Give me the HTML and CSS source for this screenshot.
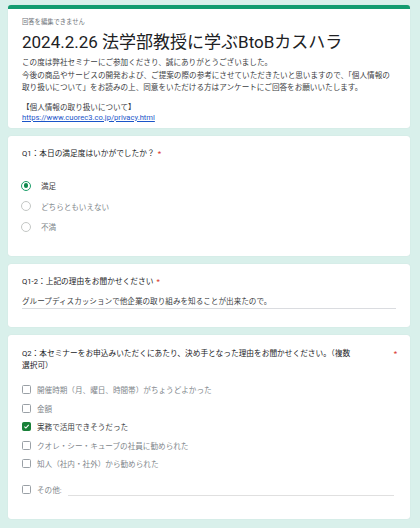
FILE: index.html
```html
<!DOCTYPE html>
<html lang="ja">
<head>
    <meta charset="UTF-8">
    <meta name="viewport" content="width=device-width, initial-scale=1.0">
    <title>2024.2.26 法学部教授に学ぶBtoBカスハラ</title>
    <link rel="stylesheet" href="styles.css">
</head>
<body>
    <!-- Header card -->
    <div class="card header-card">
        <div class="notice">回答を編集できません</div>
        <h1 class="form-title">2024.2.26 法学部教授に学ぶBtoBカスハラ</h1>
        <p class="description">この度は弊社セミナーにご参加くださり、誠にありがとうございました。<br>今後の商品やサービスの開発および、ご提案の際の参考にさせていただきたいと思いますので、「個人情報の<br>取り扱いについて」をお読みの上、同意をいただける方はアンケートにご回答をお願いいたします。</p>
        <p class="privacy">【個人情報の取り扱いについて】<br><a href="#">https://www.cuorec3.co.jp/privacy.html</a></p>
    </div>

    <!-- Q1 -->
    <div class="card q1-card">
        <div class="question">Q1：本日の満足度はいかがでしたか？<span class="required">*</span></div>
        <ul class="options radio-list">
            <li class="selected"><span class="radio checked"></span>満足</li>
            <li><span class="radio"></span>どちらともいえない</li>
            <li><span class="radio"></span>不満</li>
        </ul>
    </div>

    <!-- Q1-2 -->
    <div class="card q12-card">
        <div class="question">Q1-2：上記の理由をお聞かせください<span class="required">*</span></div>
        <div class="answer">グループディスカッションで他企業の取り組みを知ることが出来たので。</div>
    </div>

    <!-- Q2 -->
    <div class="card q2-card">
        <div class="question wide">
            <span>Q2：本セミナーをお申込みいただくにあたり、決め手となった理由をお聞かせください。（複数<br>選択可）</span>
            <span class="required">*</span>
        </div>
        <ul class="options check-list">
            <li><span class="checkbox"></span>開催時期（月、曜日、時間帯）がちょうどよかった</li>
            <li><span class="checkbox"></span>金額</li>
            <li class="selected"><span class="checkbox checked"><svg viewBox="0 0 10 10" width="9" height="9"><path d="M2 5.2 L4.1 7.2 L8.2 2.8" fill="none" stroke="#fff" stroke-width="1.6"/></svg></span>実務で活用できそうだった</li>
            <li><span class="checkbox"></span>クオレ・シー・キューブの社員に勧められた</li>
            <li><span class="checkbox"></span>知人（社内・社外）から勧められた</li>
            <li class="other"><span class="checkbox"></span>その他:<span class="other-line"></span></li>
        </ul>
    </div>
</body>
</html>
```

FILE: styles.css
```css
body {
    margin: 0;
    padding: 5px 10px 8px 8px;
    background-color: #d9f0eb;
    font-family: Roboto, "Noto Sans CJK JP", sans-serif;
    color: #202124;
}

.card {
    background: #fff;
    border-radius: 3px;
    box-shadow: 0 0 1px rgba(0, 0, 0, 0.12);
    padding: 12px 14px 18px 14px;
    margin-bottom: 8px;
}

.header-card {
    border-top: 4px solid #139c70;
    padding-top: 8px;
    padding-bottom: 5px;
}

.notice {
    font-size: 6.3px;
    line-height: 10px;
    color: #70757a;
}

.form-title {
    font-size: 17px;
    font-weight: 400;
    line-height: 22px;
    margin: 4px 0 4px 0;
    color: #202124;
}

.description {
    font-size: 7.6px;
    line-height: 12.5px;
    margin: 0;
    color: #3c4043;
}

.privacy {
    font-size: 7.6px;
    line-height: 10px;
    margin: 8px 0 0 0;
    color: #3c4043;
}

.privacy a {
    color: #1a55c9;
}

.question {
    font-size: 7.7px;
    line-height: 12px;
    color: #202124;
}

.question.wide {
    display: flex;
    justify-content: space-between;
    line-height: 11.5px;
}

.required {
    color: #d93025;
    margin-left: 3px;
}

.options {
    list-style: none;
    margin: 0;
    padding: 0;
    font-size: 7.6px;
    color: #80868b;
}

.options li {
    display: flex;
    align-items: center;
}

.options li.selected {
    color: #3c4043;
}

/* Q1 radios */
.q1-card {
    padding-bottom: 19px;
}

.radio-list {
    margin-top: 16px;
}

.radio-list li {
    height: 20.5px;
}

.radio {
    box-sizing: border-box;
    width: 10px;
    height: 10px;
    border: 1px solid #c4c7c5;
    border-radius: 50%;
    margin: 0 10px 0 -1px;
    display: flex;
    align-items: center;
    justify-content: center;
}

.radio.checked {
    border: 1.4px solid #1e9e6a;
}

.radio.checked::after {
    content: "";
    width: 4.6px;
    height: 4.6px;
    border-radius: 50%;
    background: #0f8a4e;
}

/* Q1-2 answer */
.answer {
    margin-top: 8px;
    font-size: 7.6px;
    line-height: 11px;
    color: #3c4043;
    padding-bottom: 1px;
    border-bottom: 1px solid #dadce0;
}

/* Q2 checkboxes */
.q2-card {
    padding-top: 13px;
    padding-right: 13px;
    padding-bottom: 20px;
}

.check-list {
    margin-top: 9.5px;
}

.check-list li {
    height: 18.5px;
}

.checkbox {
    box-sizing: border-box;
    width: 9px;
    height: 9px;
    border: 1.4px solid #9aa0a6;
    border-radius: 1.5px;
    margin-right: 6px;
    display: flex;
    align-items: center;
    justify-content: center;
}

.checkbox.checked {
    background: #188038;
    border-color: #188038;
}

.checkbox svg {
    display: block;
}

.check-list li.other {
    margin-top: 7.5px;
}

.other-line {
    flex: 1;
    height: 1px;
    background: #e0e0e0;
    margin: 11px 3px 0 6px;
}
```
